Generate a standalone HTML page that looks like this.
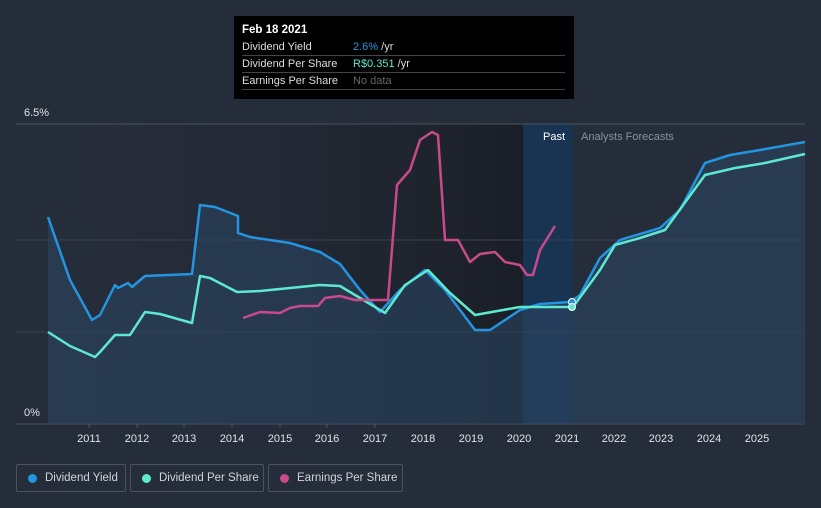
<!DOCTYPE html>
<html><head><style>
body{margin:0;width:821px;height:508px;background:#262d3a;font-family:"Liberation Sans",sans-serif;overflow:hidden;position:relative}
.tt{position:absolute;left:234px;top:16px;width:340px;height:83px;background:#000;color:#ddd;font-size:11px}
.tt .r{position:absolute;left:8px;width:323px;border-bottom:1px solid #444;height:16px;line-height:16px}
.lg{position:absolute;top:464px;height:28px;border:1px solid #4a5160;border-radius:2px;color:#d0d4da;font-size:11.5px;line-height:26px;box-sizing:border-box;white-space:nowrap}
.lg i{position:absolute;left:11px;top:9px;width:9px;height:9px;border-radius:50%}
.lg span{position:absolute;left:28px}
</style></head><body>
<svg width="821" height="508" style="position:absolute;left:0;top:0">
<defs>
<linearGradient id="past" x1="0" x2="1"><stop offset="0" stop-color="#262d3a" stop-opacity="0"/><stop offset="1" stop-color="#1a1e26"/></linearGradient>
</defs>
<rect x="16" y="124" width="507" height="300" fill="url(#past)"/>
<rect x="523" y="124" width="50" height="300" fill="#16345a" opacity="0.8"/>
<line x1="16" y1="124" x2="805" y2="124" stroke="#4a5160"/>
<line x1="16" y1="240" x2="805" y2="240" stroke="#3a4150"/>
<line x1="16" y1="332" x2="805" y2="332" stroke="#3a4150"/>
<line x1="16" y1="424" x2="805" y2="424" stroke="#4a5160"/>
<path d="M48,217 L70,280 L92,320 L100,315 L115,285 L118,288 L128,283 L132,287 L145,276 L192,274 L200,205 L215,207 L238,216 L238,233 L250,237 L290,243 L320,252 L340,264 L360,290 L380,312 L400,290 L425,270 L445,290 L475,330 L490,330 L520,310 L540,304 L570,302 L580,295 L600,258 L620,240 L660,228 L680,210 L705,163 L730,155 L760,150 L805,142 L805,424 L48,424Z" fill="#2a4560" opacity="0.6"/>
<path d="M48,217 L70,280 L92,320 L100,315 L115,285 L118,288 L128,283 L132,287 L145,276 L192,274 L200,205 L215,207 L238,216 L238,233 L250,237 L290,243 L320,252 L340,264 L360,290 L380,312 L400,290 L425,270 L445,290 L475,330 L490,330 L520,310 L540,304 L570,302 L580,295 L600,258 L620,240 L660,228 L680,210 L705,163 L730,155 L760,150 L805,142" fill="none" stroke="#2394df" stroke-width="2.5" stroke-linejoin="round"/>
<path d="M48,332 L70,346 L95,357 L100,352 L115,335 L130,335 L145,312 L160,314 L192,323 L200,276 L210,278 L237,292 L260,291 L290,288 L320,285 L340,286 L360,298 L385,313 L405,285 L428,270 L450,293 L475,315 L520,307 L573,307 L600,270 L615,245 L640,238 L665,230 L705,175 L735,168 L765,163 L805,154" fill="none" stroke="#5ee8d0" stroke-width="2.5" stroke-linejoin="round"/>
<path d="M243,318 L260,312 L280,313 L290,308 L300,306 L318,306 L325,298 L340,296 L355,300 L388,300 L397,185 L410,170 L420,140 L432,132 L438,135 L445,240 L458,240 L470,262 L480,254 L495,252 L505,262 L520,265 L527,275 L533,275 L540,250 L555,226" fill="none" stroke="#c84a8b" stroke-width="2.5" stroke-linejoin="round"/>
<circle cx="572" cy="302" r="3.5" fill="#2394df" stroke="#fff" stroke-width="1"/>
<circle cx="572" cy="307" r="3.5" fill="#5ee8d0" stroke="#fff" stroke-width="1"/>
<g fill="#e0e3e8" font-size="11" text-anchor="middle">
<text x="89" y="442">2011</text><text x="137" y="442">2012</text><text x="184" y="442">2013</text><text x="232" y="442">2014</text><text x="280" y="442">2015</text><text x="327" y="442">2016</text><text x="375" y="442">2017</text><text x="423" y="442">2018</text><text x="471" y="442">2019</text><text x="519" y="442">2020</text><text x="567" y="442">2021</text><text x="614" y="442">2022</text><text x="661" y="442">2023</text><text x="709" y="442">2024</text><text x="757" y="442">2025</text>
</g>
<g stroke="#4a5160"><line x1="89" y1="424" x2="89" y2="428"/><line x1="137" y1="424" x2="137" y2="428"/><line x1="184" y1="424" x2="184" y2="428"/><line x1="232" y1="424" x2="232" y2="428"/><line x1="280" y1="424" x2="280" y2="428"/><line x1="327" y1="424" x2="327" y2="428"/><line x1="375" y1="424" x2="375" y2="428"/></g>
<text x="24" y="116" fill="#e0e3e8" font-size="11">6.5%</text>
<text x="24" y="416" fill="#e0e3e8" font-size="11">0%</text>
<text x="565" y="140" fill="#fff" font-size="11" text-anchor="end">Past</text>
<text x="581" y="140" fill="#8a909a" font-size="11">Analysts Forecasts</text>
</svg>
<div class="tt">
<div style="position:absolute;left:8px;top:8px;font-weight:bold;color:#fff;font-size:11.5px">Feb 18 2021</div>
<div class="r" style="top:23px">Dividend Yield<span style="position:absolute;left:111px"><b style="color:#2394df;font-weight:normal">2.6%</b> /yr</span></div>
<div class="r" style="top:40px">Dividend Per Share<span style="position:absolute;left:111px"><b style="color:#5ee8d0;font-weight:normal">R$0.351</b> /yr</span></div>
<div class="r" style="top:57px">Earnings Per Share<span style="position:absolute;left:111px;color:#666">No data</span></div>
</div>
<div class="lg" style="left:16px;width:110px"><i style="background:#2394df"></i><span>Dividend Yield</span></div>
<div class="lg" style="left:130px;width:134px"><i style="background:#5ee8d0"></i><span>Dividend Per Share</span></div>
<div class="lg" style="left:268px;width:135px"><i style="background:#c84a8b"></i><span>Earnings Per Share</span></div>
</body></html>
